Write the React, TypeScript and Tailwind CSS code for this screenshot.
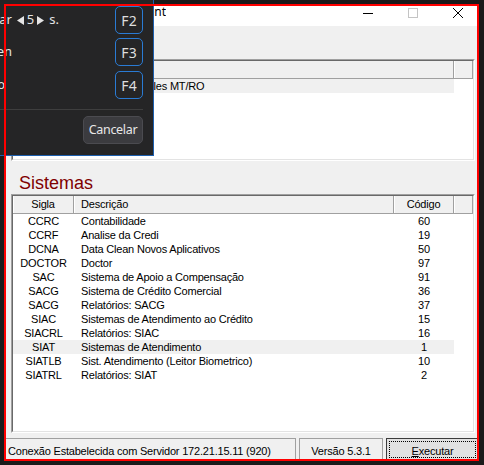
import React from "react";

const sistemas: [string, string, string][] = [
  ["CCRC", "Contabilidade", "60"],
  ["CCRF", "Analise da Credi", "19"],
  ["DCNA", "Data Clean Novos Aplicativos", "50"],
  ["DOCTOR", "Doctor", "97"],
  ["SAC", "Sistema de Apoio a Compensação", "91"],
  ["SACG", "Sistema de Crédito Comercial", "36"],
  ["SACG", "Relatórios: SACG", "37"],
  ["SIAC", "Sistemas de Atendimento ao Crédito", "15"],
  ["SIACRL", "Relatórios: SIAC", "16"],
  ["SIAT", "Sistemas de Atendimento", "1"],
  ["SIATLB", "Sist. Atendimento (Leitor Biometrico)", "10"],
  ["SIATRL", "Relatórios: SIAT", "2"],
];

function Sunken({ className, children }: { className: string; children: React.ReactNode }) {
  return (
    <div className={`border border-t-[#a0a0a0] border-l-[#a0a0a0] border-r-white border-b-white ${className}`}>
      <div className="h-full border border-t-[#696969] border-l-[#696969] border-r-[#e3e3e3] border-b-[#e3e3e3] bg-white flex flex-col overflow-hidden">
        {children}
      </div>
    </div>
  );
}

function HeadCell({ className, children }: { className: string; children?: React.ReactNode }) {
  return (
    <div className={`h-full flex items-center border-r border-r-[#a0a0a0] shadow-[inset_1px_0_0_#ffffff] leading-[17px] whitespace-nowrap overflow-hidden ${className}`}>
      {children}
    </div>
  );
}

function Tri({ dir }: { dir: "l" | "r" }) {
  return (
    <svg width="7" height="9" viewBox="0 0 7 9" className="shrink-0">
      <path d={dir === "l" ? "M7 0L0 4.5L7 9Z" : "M0 0L7 4.5L0 9Z"} fill="currentColor" />
    </svg>
  );
}

function FKey({ k }: { k: string }) {
  return (
    <div className="ml-auto shrink-0 w-[28px] h-[28px] rounded-[5px] border border-[#2a7bd4] flex items-center justify-center text-[14px] text-[#dedede]">
      {k}
    </div>
  );
}

export default function App() {
  const list = "font-['Liberation_Sans',Arial,sans-serif] text-[11px] tracking-[-0.2px] text-black";
  return (
    <div className="relative w-[484px] h-[465px] overflow-hidden bg-[#1a1a1a] pt-[4px] pl-[4px]">
      {/* Window */}
      <div className="w-[475px] h-[457px] flex flex-col bg-[#f0f0f0]">
        {/* Title bar */}
        <div className="h-[22px] shrink-0 bg-white flex items-start font-['Noto_Sans',sans-serif] text-[12px] text-black">
          <div className="w-[162px] shrink-0 flex justify-end overflow-hidden leading-[16px] whitespace-nowrap">
            <span className="shrink-0">Acesso Client</span>
          </div>
          <div className="ml-auto mt-[4px] flex items-center gap-[35px] pr-[16px]">
            <svg width="10" height="10" viewBox="0 0 10 10">
              <path d="M0 5.5H10" stroke="#000" strokeWidth="1" />
            </svg>
            <svg width="10" height="10" viewBox="0 0 10 10">
              <rect x="0.5" y="0.5" width="9" height="9" fill="none" stroke="#c4c4c4" strokeWidth="1" />
            </svg>
            <svg width="10" height="10" viewBox="0 0 10 10">
              <path d="M0 0L10 10M10 0L0 10" stroke="#000" strokeWidth="1" />
            </svg>
          </div>
        </div>

        {/* Body */}
        <div className={`flex-1 flex flex-col pl-[7px] pr-[4px] ${list}`}>
          <div className="mt-[11px] h-[22px] shrink-0 pl-[8px] font-['Liberation_Sans',Arial,sans-serif] text-[18px] leading-[22px] tracking-normal text-[#800000]">
            Ambientes
          </div>
          <Sunken className="h-[102px] shrink-0">
            <div className="h-[18px] shrink-0 flex border-b border-b-[#a0a0a0] bg-[#f0f0f0]">
              <HeadCell className="w-[94px] justify-center">Ambiente</HeadCell>
              <HeadCell className="w-[347px] pl-[7px]">Nome</HeadCell>
              <HeadCell className="flex-1" />
            </div>
            <div className="flex-1">
              <div className="h-[14px] flex">
                <div className="w-[441px] h-full flex bg-[#f0f0f0]">
                  <div className="w-[94px] text-center leading-[15px]">PRD-MT</div>
                  <div className="w-[347px] pl-[7px] leading-[15px] whitespace-nowrap overflow-hidden">Regionales MT/RO</div>
                </div>
              </div>
            </div>
          </Sunken>

          <div className="mt-[11px] h-[22px] shrink-0 pl-[8px] font-['Liberation_Sans',Arial,sans-serif] text-[18px] leading-[22px] tracking-normal text-[#800000]">
            Sistemas
          </div>
          <Sunken className="h-[239px] shrink-0">
            <div className="h-[18px] shrink-0 flex border-b border-b-[#a0a0a0] bg-[#f0f0f0]">
              <HeadCell className="w-[61px] justify-center">Sigla</HeadCell>
              <HeadCell className="w-[320px] pl-[7px]">Descrição</HeadCell>
              <HeadCell className="w-[60px] justify-center">Código</HeadCell>
              <HeadCell className="flex-1" />
            </div>
            <div className="flex-1 flex flex-col">
              {sistemas.map(([s, d, c], i) => (
                <div key={i} className="h-[14px] shrink-0 flex">
                  <div className={`w-[441px] h-full flex ${i === 9 ? "bg-[#f0f0f0]" : ""}`}>
                    <div className="w-[61px] text-center leading-[15px]">{s}</div>
                    <div className="w-[320px] pl-[7px] leading-[15px] whitespace-nowrap overflow-hidden">{d}</div>
                    <div className="w-[60px] text-center leading-[15px]">{c}</div>
                  </div>
                </div>
              ))}
            </div>
          </Sunken>
        </div>

        {/* Status bar */}
        <div className={`h-[28px] shrink-0 flex pt-[5px] pl-[1px] gap-[3px] ${list}`}>
          <div className="w-[291px] border-t border-l border-r border-[#a0a0a0] pt-[5px] pl-[2px] leading-[14px] whitespace-nowrap">
            Conexão Estabelecida com Servidor 172.21.15.11 (920)
          </div>
          <div className="w-[84px] border-t border-l border-r border-[#a0a0a0] pt-[5px] text-center leading-[14px] whitespace-nowrap">
            Versão 5.3.1
          </div>
          <div className="w-[93px] border border-[#3c3c3c] bg-[#e1e1e1] p-[2px]">
            <div className="h-full border border-dotted border-[#000] pt-[2px] text-center leading-[14px]">
              <span className="underline">E</span>xecutar
            </div>
          </div>
        </div>
      </div>

      {/* Dark popup overlay */}
      <div className="absolute left-0 top-0 w-[154px] h-[156px] bg-[#252526] border-r border-b border-[#1d5fae] overflow-hidden flex flex-col pt-[6px] pr-[10px] font-['Noto_Sans',sans-serif] text-[13px] text-[#e4e4e4]">
        <div className="h-[28px] flex items-center">
          <div className="w-[59px] shrink-0 flex justify-end items-center whitespace-nowrap">
            <span className="shrink-0">Executar</span>
            <span className="ml-[5px] shrink-0 flex"><Tri dir="l" /></span>
            <span className="ml-[3px] shrink-0">5</span>
            <span className="ml-[3px] shrink-0 flex"><Tri dir="r" /></span>
            <span className="ml-[5px] shrink-0">s.</span>
          </div>
          <FKey k="F2" />
        </div>
        <div className="h-[28px] mt-[4px] flex items-center">
          <div className="w-[12px] shrink-0 flex justify-end whitespace-nowrap">
            <span className="shrink-0">Alterar Token</span>
          </div>
          <FKey k="F3" />
        </div>
        <div className="h-[28px] mt-[5px] flex items-center">
          <div className="w-[5px] shrink-0 flex justify-end whitespace-nowrap">
            <span className="shrink-0">Reiniciar Serviço</span>
          </div>
          <FKey k="F4" />
        </div>
        <div className="mt-[10px] h-px bg-[#3e3e3e]" />
        <div className="mt-[6px] flex">
          <div className="ml-auto w-[60px] h-[28px] rounded-[5px] bg-[#3b3b3f] border border-[#4b4b50] flex items-center justify-center text-[12.5px] tracking-[-0.3px] text-[#e8e8e8]">
            Cancelar
          </div>
        </div>
      </div>

      {/* Red annotation rectangle */}
      <div className="absolute left-[4px] top-[4px] w-[475px] h-[457px] border-2 border-[#ff0000] pointer-events-none" />
    </div>
  );
}
